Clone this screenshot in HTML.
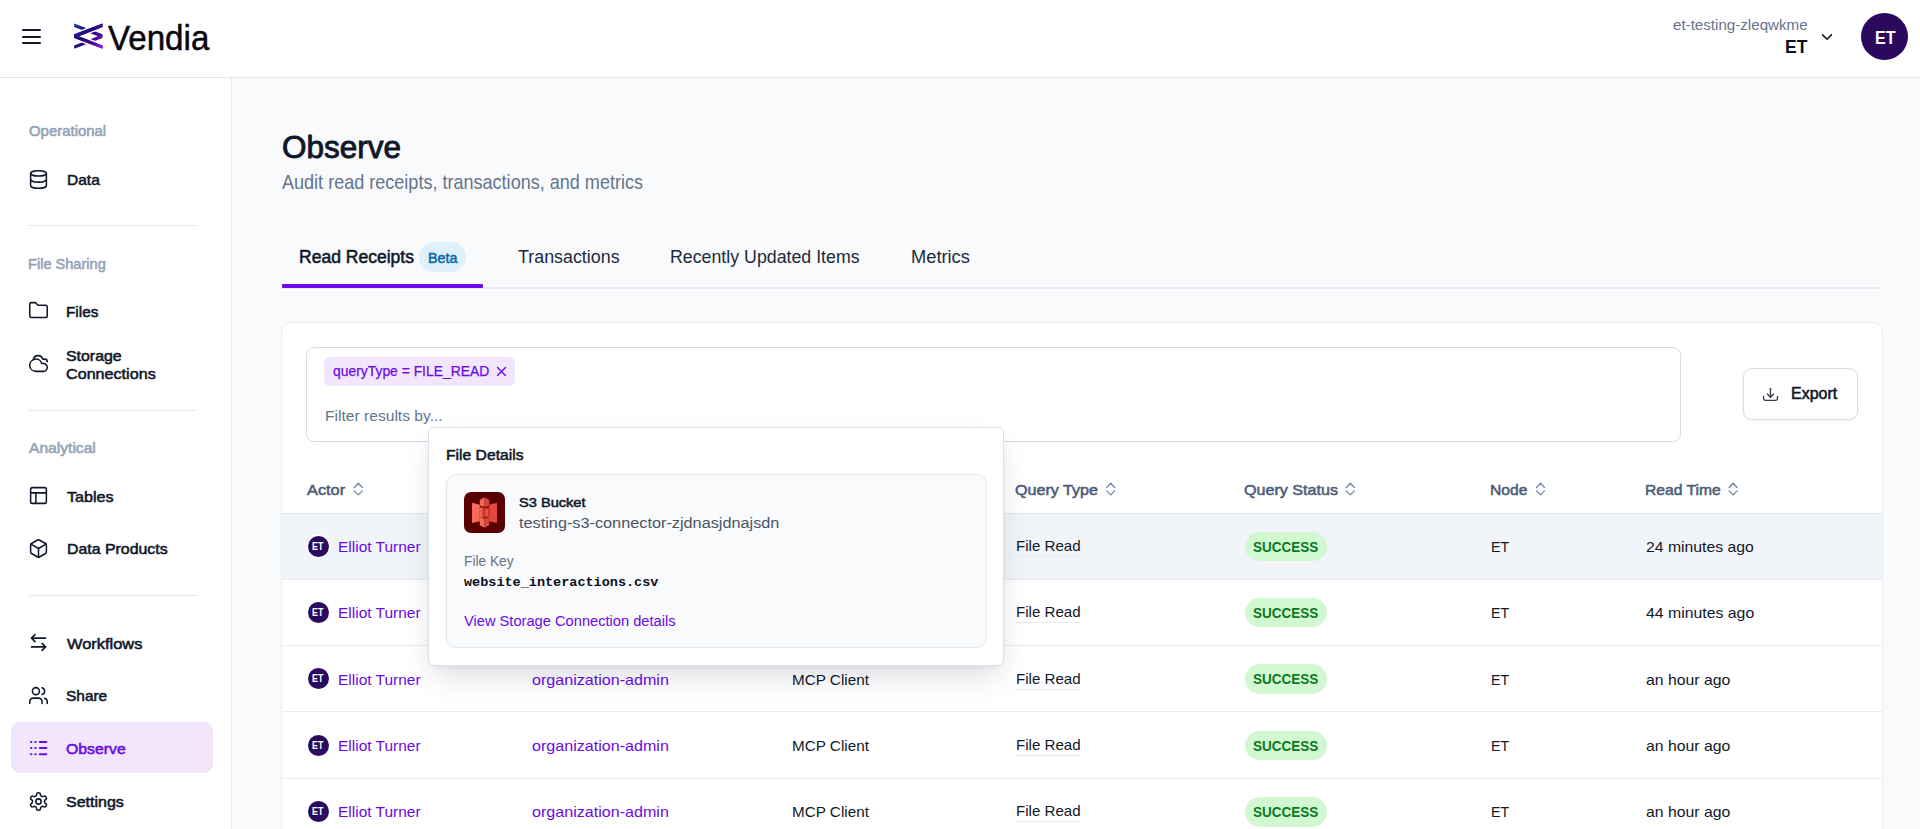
<!DOCTYPE html>
<html><head><meta charset="utf-8"><style>
html,body{margin:0;padding:0}
body{width:1920px;height:829px;overflow:hidden;position:relative;background:#fff;font-family:"Liberation Sans",sans-serif}
.t{position:absolute;white-space:nowrap;line-height:1;transform-origin:0 0}
.abs{position:absolute;box-sizing:border-box}
</style></head><body>
<div class="abs" style="left:0;top:0;width:1920px;height:78px;background:#fff;border-bottom:1px solid #e2e8f0"></div>
<div class="abs" style="left:0;top:78px;width:232px;height:751px;background:#fff;border-right:1px solid #e5e9f0"></div>
<div class="abs" style="left:232px;top:78px;width:1688px;height:751px;background:#f8fafc"></div>
<!-- hamburger -->
<div class="abs" style="left:22px;top:29px;width:19px;height:2px;background:#111827;border-radius:1px"></div>
<div class="abs" style="left:22px;top:35.5px;width:19px;height:2px;background:#111827;border-radius:1px"></div>
<div class="abs" style="left:22px;top:42px;width:19px;height:2px;background:#111827;border-radius:1px"></div>
<!-- logo mark -->
<svg class="abs" style="left:74px;top:23px;overflow:visible" width="29" height="26" viewBox="0 0 29 26">
<defs><linearGradient id="lg" gradientUnits="userSpaceOnUse" x1="0" y1="0" x2="29" y2="26"><stop offset="0" stop-color="#1f3cae"/><stop offset="0.42" stop-color="#23067c"/><stop offset="0.7" stop-color="#4a0b96"/><stop offset="1" stop-color="#9a20ee"/></linearGradient></defs>
<polygon fill="url(#lg)" points="0.17,0.53 0.17,3.97 23.86,13.2 0.17,22.4 0.17,25.85 28.56,15.0 28.56,11.2"/>
<polygon fill="url(#lg)" stroke="#fff" stroke-width="3" paint-order="stroke" stroke-linejoin="miter" points="28.56,0.53 28.56,3.97 4.87,13.2 28.56,22.4 28.56,25.85 0.17,15.0 0.17,11.2"/>
<polygon fill="url(#lg)" points="28.56,0.53 28.56,3.97 4.87,13.2 28.56,22.4 28.56,25.85 0.17,15.0 0.17,11.2"/>
</svg>
<!-- header chevron -->
<svg class="abs" style="left:1821px;top:33px" width="12" height="8" viewBox="0 0 12 8"><path d="M1.6 1.9 6 6.2 10.4 1.9" fill="none" stroke="#111827" stroke-width="1.6" stroke-linecap="round" stroke-linejoin="round"/></svg>
<div class="abs" style="left:1861px;top:13.3px;width:47px;height:47px;border-radius:50%;background:#2b0a5e"></div>
<!-- sidebar dividers -->
<div class="abs" style="left:28px;top:225px;width:169px;height:1px;background:#e5e9f0"></div>
<div class="abs" style="left:28px;top:410px;width:169px;height:1px;background:#e5e9f0"></div>
<div class="abs" style="left:28px;top:595px;width:169px;height:1px;background:#e5e9f0"></div>
<div class="abs" style="left:11px;top:722px;width:202px;height:51px;background:#f2e6fd;border-radius:9px"></div>
<!-- tabs -->
<div class="abs" style="left:281px;top:287px;width:1601px;height:2px;background:#e8ecf2"></div>
<div class="abs" style="left:282px;top:284px;width:201px;height:4px;background:#6a0ae6;border-radius:1px"></div>
<div class="abs" style="left:419px;top:242px;width:47px;height:30px;background:#dff0fb;border-radius:15px"></div>
<!-- card -->
<div class="abs" style="left:281px;top:322px;width:1602px;height:600px;background:#fff;border:1px solid #e8edf3;border-radius:10px"></div>
<div class="abs" style="left:306px;top:347px;width:1375px;height:95px;background:#fff;border:1px solid #d6dde8;border-radius:8px"></div>
<div class="abs" style="left:324px;top:357px;width:191px;height:29px;background:#f2e6fd;border-radius:6px"></div>
<svg class="abs" style="left:496px;top:366px" width="11" height="11" viewBox="0 0 11 11"><path d="M1.5 1.5 9.5 9.5M9.5 1.5 1.5 9.5" stroke="#6a0ae6" stroke-width="1.4" stroke-linecap="round"/></svg>
<div class="abs" style="left:1743px;top:368px;width:115px;height:52px;background:#fff;border:1px solid #d6dde8;border-radius:9px;box-shadow:0 1px 2px rgba(15,23,42,0.05)"></div>
<svg class="abs" style="left:0;top:0;overflow:visible" width="1920" height="829" fill="none" stroke="#353d4d" stroke-width="1.35" stroke-linecap="round" stroke-linejoin="round"><path d="M1770.5 388.3V397"/><path d="M1767.4 394.1 1770.5 397.2 1773.6 394.1"/><path d="M1763.6 396.3V398.6Q1763.6 400.3 1765.3 400.3H1775.8Q1777.5 400.3 1777.5 398.6V396.3"/></svg>
<!-- table -->
<div class="abs" style="left:282px;top:513px;width:1600px;height:1px;background:#e3e8f0"></div>
<div class="abs" style="left:282px;top:514px;width:1600px;height:65px;background:#f1f5f9"></div>
<div class="abs" style="left:282px;top:579px;width:1600px;height:1px;background:#e8ecf2"></div>
<div class="abs" style="left:282px;top:645px;width:1600px;height:1px;background:#e8ecf2"></div>
<div class="abs" style="left:282px;top:711px;width:1600px;height:1px;background:#e8ecf2"></div>
<div class="abs" style="left:282px;top:778px;width:1600px;height:1px;background:#e8ecf2"></div>
<div class="abs" style="left:307.5px;top:535.75px;width:21px;height:21px;border-radius:50%;background:#2b0a5e;box-shadow:0 0 0 1.2px #fff"></div>
<span class="t" style="left:312.4px;top:541.68px;font-size:10.3px;font-weight:700;color:#fff;transform:scaleX(0.86)">ET</span>
<div class="abs" style="left:1244.5px;top:531.60px;width:82px;height:29.5px;border-radius:15px;background:#d2f8d1"></div>
<div class="abs" style="left:1015px;top:556.00px;width:66px;height:1px;background:#e5e9f0"></div>
<div class="abs" style="left:307.5px;top:602.10px;width:21px;height:21px;border-radius:50%;background:#2b0a5e;box-shadow:0 0 0 1.2px #fff"></div>
<span class="t" style="left:312.4px;top:608.03px;font-size:10.3px;font-weight:700;color:#fff;transform:scaleX(0.86)">ET</span>
<div class="abs" style="left:1244.5px;top:597.95px;width:82px;height:29.5px;border-radius:15px;background:#d2f8d1"></div>
<div class="abs" style="left:1015px;top:622.35px;width:66px;height:1px;background:#e5e9f0"></div>
<div class="abs" style="left:307.5px;top:668.45px;width:21px;height:21px;border-radius:50%;background:#2b0a5e;box-shadow:0 0 0 1.2px #fff"></div>
<span class="t" style="left:312.4px;top:674.38px;font-size:10.3px;font-weight:700;color:#fff;transform:scaleX(0.86)">ET</span>
<div class="abs" style="left:1244.5px;top:664.30px;width:82px;height:29.5px;border-radius:15px;background:#d2f8d1"></div>
<div class="abs" style="left:1015px;top:688.70px;width:66px;height:1px;background:#e5e9f0"></div>
<div class="abs" style="left:307.5px;top:734.80px;width:21px;height:21px;border-radius:50%;background:#2b0a5e;box-shadow:0 0 0 1.2px #fff"></div>
<span class="t" style="left:312.4px;top:740.73px;font-size:10.3px;font-weight:700;color:#fff;transform:scaleX(0.86)">ET</span>
<div class="abs" style="left:1244.5px;top:730.65px;width:82px;height:29.5px;border-radius:15px;background:#d2f8d1"></div>
<div class="abs" style="left:1015px;top:755.05px;width:66px;height:1px;background:#e5e9f0"></div>
<div class="abs" style="left:307.5px;top:801.15px;width:21px;height:21px;border-radius:50%;background:#2b0a5e;box-shadow:0 0 0 1.2px #fff"></div>
<span class="t" style="left:312.4px;top:807.08px;font-size:10.3px;font-weight:700;color:#fff;transform:scaleX(0.86)">ET</span>
<div class="abs" style="left:1244.5px;top:797.00px;width:82px;height:29.5px;border-radius:15px;background:#d2f8d1"></div>
<div class="abs" style="left:1015px;top:821.40px;width:66px;height:1px;background:#e5e9f0"></div>
<span class="t" style="left:108.40px;top:20.03px;font-size:35.17px;font-weight:400;color:#08080c;font-family:'Liberation Sans', sans-serif;transform:scaleX(0.9421);-webkit-text-stroke:0.5px #08080c">Vendia</span>
<span class="t" style="left:1673.40px;top:17.88px;font-size:14.2px;font-weight:400;color:#64748b;font-family:'Liberation Sans', sans-serif;transform:scaleX(1.0668);">et-testing-zleqwkme</span>
<span class="t" style="left:1785.30px;top:38.00px;font-size:18.9px;font-weight:700;color:#0b1020;font-family:'Liberation Sans', sans-serif;transform:scaleX(0.9279);">ET</span>
<span class="t" style="left:1874.50px;top:29.54px;font-size:17.44px;font-weight:700;color:#ffffff;font-family:'Liberation Sans', sans-serif;transform:scaleX(0.9194);">ET</span>
<span class="t" style="left:28.50px;top:123.87px;font-size:14.03px;font-weight:400;color:#94a3b8;font-family:'Liberation Sans', sans-serif;transform:scaleX(1.0653);-webkit-text-stroke-width:0.55px">Operational</span>
<span class="t" style="left:28.40px;top:256.62px;font-size:14.03px;font-weight:400;color:#94a3b8;font-family:'Liberation Sans', sans-serif;transform:scaleX(1.0402);-webkit-text-stroke-width:0.55px">File Sharing</span>
<span class="t" style="left:28.50px;top:441.12px;font-size:14.03px;font-weight:400;color:#94a3b8;font-family:'Liberation Sans', sans-serif;transform:scaleX(1.1136);-webkit-text-stroke-width:0.55px">Analytical</span>
<span class="t" style="left:66.80px;top:171.70px;font-size:15.12px;font-weight:400;color:#0f172a;font-family:'Liberation Sans', sans-serif;transform:scaleX(1.0275);-webkit-text-stroke-width:0.55px">Data</span>
<span class="t" style="left:66.40px;top:304.00px;font-size:15.12px;font-weight:400;color:#0f172a;font-family:'Liberation Sans', sans-serif;transform:scaleX(1.0155);-webkit-text-stroke-width:0.55px">Files</span>
<span class="t" style="left:66.40px;top:348.30px;font-size:15.12px;font-weight:400;color:#0f172a;font-family:'Liberation Sans', sans-serif;transform:scaleX(1.0525);-webkit-text-stroke-width:0.55px">Storage</span>
<span class="t" style="left:66.40px;top:366.40px;font-size:15.12px;font-weight:400;color:#0f172a;font-family:'Liberation Sans', sans-serif;transform:scaleX(1.0679);-webkit-text-stroke-width:0.55px">Connections</span>
<span class="t" style="left:66.80px;top:488.70px;font-size:15.12px;font-weight:400;color:#0f172a;font-family:'Liberation Sans', sans-serif;transform:scaleX(1.0667);-webkit-text-stroke-width:0.55px">Tables</span>
<span class="t" style="left:66.80px;top:541.30px;font-size:15.12px;font-weight:400;color:#0f172a;font-family:'Liberation Sans', sans-serif;transform:scaleX(1.0507);-webkit-text-stroke-width:0.55px">Data Products</span>
<span class="t" style="left:66.60px;top:635.50px;font-size:15.12px;font-weight:400;color:#0f172a;font-family:'Liberation Sans', sans-serif;transform:scaleX(1.0864);-webkit-text-stroke-width:0.55px">Workflows</span>
<span class="t" style="left:66.40px;top:688.40px;font-size:15.12px;font-weight:400;color:#0f172a;font-family:'Liberation Sans', sans-serif;transform:scaleX(1.0216);-webkit-text-stroke-width:0.55px">Share</span>
<span class="t" style="left:66.40px;top:741.20px;font-size:15.12px;font-weight:400;color:#6a0ae6;font-family:'Liberation Sans', sans-serif;transform:scaleX(1.0454);-webkit-text-stroke-width:0.55px">Observe</span>
<span class="t" style="left:66.40px;top:794.20px;font-size:15.12px;font-weight:400;color:#0f172a;font-family:'Liberation Sans', sans-serif;transform:scaleX(1.0584);-webkit-text-stroke-width:0.55px">Settings</span>
<span class="t" style="left:282.00px;top:131.67px;font-size:31.69px;font-weight:400;color:#0f172a;font-family:'Liberation Sans', sans-serif;transform:scaleX(0.9936);-webkit-text-stroke:0.9px #0f172a">Observe</span>
<span class="t" style="left:282.00px;top:173.19px;font-size:19.62px;font-weight:400;color:#64748b;font-family:'Liberation Sans', sans-serif;transform:scaleX(0.9200);">Audit read receipts, transactions, and metrics</span>
<span class="t" style="left:298.75px;top:248.06px;font-size:18.53px;font-weight:400;color:#0f172a;font-family:'Liberation Sans', sans-serif;transform:scaleX(0.9469);-webkit-text-stroke-width:0.55px">Read Receipts</span>
<span class="t" style="left:427.75px;top:250.08px;font-size:15.26px;font-weight:400;color:#0b6ba3;font-family:'Liberation Sans', sans-serif;transform:scaleX(0.9402);-webkit-text-stroke-width:0.55px">Beta</span>
<span class="t" style="left:517.80px;top:248.06px;font-size:18.53px;font-weight:400;color:#1e293b;font-family:'Liberation Sans', sans-serif;transform:scaleX(0.9647);">Transactions</span>
<span class="t" style="left:670.40px;top:248.06px;font-size:18.53px;font-weight:400;color:#1e293b;font-family:'Liberation Sans', sans-serif;transform:scaleX(0.9595);">Recently Updated Items</span>
<span class="t" style="left:911.30px;top:248.06px;font-size:18.53px;font-weight:400;color:#1e293b;font-family:'Liberation Sans', sans-serif;transform:scaleX(0.9871);">Metrics</span>
<span class="t" style="left:332.50px;top:363.70px;font-size:14.53px;font-weight:400;color:#6a0ae6;font-family:'Liberation Sans', sans-serif;transform:scaleX(0.9563);-webkit-text-stroke-width:0.25px">queryType = FILE_READ</span>
<span class="t" style="left:324.70px;top:407.88px;font-size:15.26px;font-weight:400;color:#64748b;font-family:'Liberation Sans', sans-serif;transform:scaleX(1.0238);">Filter results by...</span>
<span class="t" style="left:1790.80px;top:386.41px;font-size:15.7px;font-weight:400;color:#0f172a;font-family:'Liberation Sans', sans-serif;transform:scaleX(1.0189);-webkit-text-stroke-width:0.55px">Export</span>
<span class="t" style="left:307.40px;top:482.06px;font-size:15.41px;font-weight:400;color:#4b5d78;font-family:'Liberation Sans', sans-serif;transform:scaleX(1.0593);-webkit-text-stroke-width:0.55px">Actor</span>
<span class="t" style="left:1015.00px;top:482.06px;font-size:15.41px;font-weight:400;color:#4b5d78;font-family:'Liberation Sans', sans-serif;transform:scaleX(1.0446);-webkit-text-stroke-width:0.55px">Query Type</span>
<span class="t" style="left:1243.50px;top:482.06px;font-size:15.41px;font-weight:400;color:#4b5d78;font-family:'Liberation Sans', sans-serif;transform:scaleX(1.0454);-webkit-text-stroke-width:0.55px">Query Status</span>
<span class="t" style="left:1490.30px;top:482.06px;font-size:15.41px;font-weight:400;color:#4b5d78;font-family:'Liberation Sans', sans-serif;transform:scaleX(1.0151);-webkit-text-stroke-width:0.55px">Node</span>
<span class="t" style="left:1644.60px;top:482.06px;font-size:15.41px;font-weight:400;color:#4b5d78;font-family:'Liberation Sans', sans-serif;transform:scaleX(1.0161);-webkit-text-stroke-width:0.55px">Read Time</span>
<span class="t" style="left:338.00px;top:538.96px;font-size:15.41px;font-weight:400;color:#6a0ae6;font-family:'Liberation Sans', sans-serif;transform:scaleX(1.0048);">Elliot Turner</span>
<span class="t" style="left:532.20px;top:538.96px;font-size:15.41px;font-weight:400;color:#6a0ae6;font-family:'Liberation Sans', sans-serif;transform:scaleX(1.0448);">organization-admin</span>
<span class="t" style="left:791.90px;top:538.96px;font-size:15.41px;font-weight:400;color:#111827;font-family:'Liberation Sans', sans-serif;transform:scaleX(0.9905);">MCP Client</span>
<span class="t" style="left:1016.00px;top:537.96px;font-size:15.41px;font-weight:400;color:#111827;font-family:'Liberation Sans', sans-serif;transform:scaleX(0.9797);">File Read</span>
<span class="t" style="left:1253.00px;top:539.63px;font-size:14.97px;font-weight:700;color:#0a7b22;font-family:'Liberation Sans', sans-serif;transform:scaleX(0.9022);">SUCCESS</span>
<span class="t" style="left:1491.30px;top:538.96px;font-size:15.41px;font-weight:400;color:#111827;font-family:'Liberation Sans', sans-serif;transform:scaleX(0.9244);">ET</span>
<span class="t" style="left:1646.00px;top:538.96px;font-size:15.41px;font-weight:400;color:#111827;font-family:'Liberation Sans', sans-serif;transform:scaleX(1.0232);">24 minutes ago</span>
<span class="t" style="left:338.00px;top:605.31px;font-size:15.41px;font-weight:400;color:#6a0ae6;font-family:'Liberation Sans', sans-serif;transform:scaleX(1.0048);">Elliot Turner</span>
<span class="t" style="left:532.20px;top:605.31px;font-size:15.41px;font-weight:400;color:#6a0ae6;font-family:'Liberation Sans', sans-serif;transform:scaleX(1.0448);">organization-admin</span>
<span class="t" style="left:791.90px;top:605.31px;font-size:15.41px;font-weight:400;color:#111827;font-family:'Liberation Sans', sans-serif;transform:scaleX(0.9905);">MCP Client</span>
<span class="t" style="left:1016.00px;top:604.31px;font-size:15.41px;font-weight:400;color:#111827;font-family:'Liberation Sans', sans-serif;transform:scaleX(0.9797);">File Read</span>
<span class="t" style="left:1253.00px;top:605.98px;font-size:14.97px;font-weight:700;color:#0a7b22;font-family:'Liberation Sans', sans-serif;transform:scaleX(0.9022);">SUCCESS</span>
<span class="t" style="left:1491.30px;top:605.31px;font-size:15.41px;font-weight:400;color:#111827;font-family:'Liberation Sans', sans-serif;transform:scaleX(0.9244);">ET</span>
<span class="t" style="left:1646.00px;top:605.31px;font-size:15.41px;font-weight:400;color:#111827;font-family:'Liberation Sans', sans-serif;transform:scaleX(1.0270);">44 minutes ago</span>
<span class="t" style="left:338.00px;top:671.66px;font-size:15.41px;font-weight:400;color:#6a0ae6;font-family:'Liberation Sans', sans-serif;transform:scaleX(1.0048);">Elliot Turner</span>
<span class="t" style="left:532.20px;top:671.66px;font-size:15.41px;font-weight:400;color:#6a0ae6;font-family:'Liberation Sans', sans-serif;transform:scaleX(1.0448);">organization-admin</span>
<span class="t" style="left:791.90px;top:671.66px;font-size:15.41px;font-weight:400;color:#111827;font-family:'Liberation Sans', sans-serif;transform:scaleX(0.9905);">MCP Client</span>
<span class="t" style="left:1016.00px;top:670.66px;font-size:15.41px;font-weight:400;color:#111827;font-family:'Liberation Sans', sans-serif;transform:scaleX(0.9797);">File Read</span>
<span class="t" style="left:1253.00px;top:672.33px;font-size:14.97px;font-weight:700;color:#0a7b22;font-family:'Liberation Sans', sans-serif;transform:scaleX(0.9022);">SUCCESS</span>
<span class="t" style="left:1491.30px;top:671.66px;font-size:15.41px;font-weight:400;color:#111827;font-family:'Liberation Sans', sans-serif;transform:scaleX(0.9244);">ET</span>
<span class="t" style="left:1646.00px;top:671.66px;font-size:15.41px;font-weight:400;color:#111827;font-family:'Liberation Sans', sans-serif;transform:scaleX(1.0261);">an hour ago</span>
<span class="t" style="left:338.00px;top:738.01px;font-size:15.41px;font-weight:400;color:#6a0ae6;font-family:'Liberation Sans', sans-serif;transform:scaleX(1.0048);">Elliot Turner</span>
<span class="t" style="left:532.20px;top:738.01px;font-size:15.41px;font-weight:400;color:#6a0ae6;font-family:'Liberation Sans', sans-serif;transform:scaleX(1.0448);">organization-admin</span>
<span class="t" style="left:791.90px;top:738.01px;font-size:15.41px;font-weight:400;color:#111827;font-family:'Liberation Sans', sans-serif;transform:scaleX(0.9905);">MCP Client</span>
<span class="t" style="left:1016.00px;top:737.01px;font-size:15.41px;font-weight:400;color:#111827;font-family:'Liberation Sans', sans-serif;transform:scaleX(0.9797);">File Read</span>
<span class="t" style="left:1253.00px;top:738.68px;font-size:14.97px;font-weight:700;color:#0a7b22;font-family:'Liberation Sans', sans-serif;transform:scaleX(0.9022);">SUCCESS</span>
<span class="t" style="left:1491.30px;top:738.01px;font-size:15.41px;font-weight:400;color:#111827;font-family:'Liberation Sans', sans-serif;transform:scaleX(0.9244);">ET</span>
<span class="t" style="left:1646.00px;top:738.01px;font-size:15.41px;font-weight:400;color:#111827;font-family:'Liberation Sans', sans-serif;transform:scaleX(1.0261);">an hour ago</span>
<span class="t" style="left:338.00px;top:804.36px;font-size:15.41px;font-weight:400;color:#6a0ae6;font-family:'Liberation Sans', sans-serif;transform:scaleX(1.0048);">Elliot Turner</span>
<span class="t" style="left:532.20px;top:804.36px;font-size:15.41px;font-weight:400;color:#6a0ae6;font-family:'Liberation Sans', sans-serif;transform:scaleX(1.0448);">organization-admin</span>
<span class="t" style="left:791.90px;top:804.36px;font-size:15.41px;font-weight:400;color:#111827;font-family:'Liberation Sans', sans-serif;transform:scaleX(0.9905);">MCP Client</span>
<span class="t" style="left:1016.00px;top:803.36px;font-size:15.41px;font-weight:400;color:#111827;font-family:'Liberation Sans', sans-serif;transform:scaleX(0.9797);">File Read</span>
<span class="t" style="left:1253.00px;top:805.03px;font-size:14.97px;font-weight:700;color:#0a7b22;font-family:'Liberation Sans', sans-serif;transform:scaleX(0.9022);">SUCCESS</span>
<span class="t" style="left:1491.30px;top:804.36px;font-size:15.41px;font-weight:400;color:#111827;font-family:'Liberation Sans', sans-serif;transform:scaleX(0.9244);">ET</span>
<span class="t" style="left:1646.00px;top:804.36px;font-size:15.41px;font-weight:400;color:#111827;font-family:'Liberation Sans', sans-serif;transform:scaleX(1.0261);">an hour ago</span>
<svg style="position:absolute;left:27.95px;top:168.6px;color:#0f172a" width="21" height="21" viewBox="0 0 24 24" fill="none" stroke="currentColor" stroke-width="1.75" stroke-linecap="round" stroke-linejoin="round"><ellipse cx="12" cy="5" rx="9" ry="3"/><path d="M3 5V19A9 3 0 0 0 21 19V5"/><path d="M3 12A9 3 0 0 0 21 12"/></svg>
<svg style="position:absolute;left:28.0px;top:300.0px;color:#0f172a" width="21" height="21" viewBox="0 0 24 24" fill="none" stroke="currentColor" stroke-width="1.75" stroke-linecap="round" stroke-linejoin="round"><path d="M20 20a2 2 0 0 0 2-2V8a2 2 0 0 0-2-2h-7.9a2 2 0 0 1-1.69-.9L9.6 3.9A2 2 0 0 0 7.93 3H4a2 2 0 0 0-2 2v13a2 2 0 0 0 2 2Z"/></svg>
<svg style="position:absolute;left:28.2px;top:353.4px;color:#0f172a" width="21" height="21" viewBox="0 0 24 24" fill="none" stroke="currentColor" stroke-width="1.75" stroke-linecap="round" stroke-linejoin="round"><path d="M17.5 21H9a7 7 0 1 1 6.71-9h1.79a4.5 4.5 0 1 1 0 9Z"/><path d="M22 10a3 3 0 0 0-3-3h-2.207a5.502 5.502 0 0 0-10.702.5"/></svg>
<svg style="position:absolute;left:28.1px;top:485.2px;color:#0f172a" width="21" height="21" viewBox="0 0 24 24" fill="none" stroke="currentColor" stroke-width="1.75" stroke-linecap="round" stroke-linejoin="round"><rect x="3" y="3" width="18" height="18" rx="2"/><path d="M3 9h18"/><path d="M9 9v12"/></svg>
<svg style="position:absolute;left:28.1px;top:538.3px;color:#0f172a" width="21" height="21" viewBox="0 0 24 24" fill="none" stroke="currentColor" stroke-width="1.75" stroke-linecap="round" stroke-linejoin="round"><path d="M21 8a2 2 0 0 0-1-1.73l-7-4a2 2 0 0 0-2 0l-7 4A2 2 0 0 0 3 8v8a2 2 0 0 0 1 1.73l7 4a2 2 0 0 0 2 0l7-4A2 2 0 0 0 21 16Z"/><path d="m3.3 7 8.7 5 8.7-5"/><path d="M12 22V12"/></svg>
<svg style="position:absolute;left:28.1px;top:631.7px;color:#0f172a" width="21" height="21" viewBox="0 0 24 24" fill="none" stroke="currentColor" stroke-width="1.75" stroke-linecap="round" stroke-linejoin="round"><path d="M8 3 4 7l4 4"/><path d="M4 7h16"/><path d="m16 21 4-4-4-4"/><path d="M20 17H4"/></svg>
<svg style="position:absolute;left:28.2px;top:684.7px;color:#0f172a" width="21" height="21" viewBox="0 0 24 24" fill="none" stroke="currentColor" stroke-width="1.75" stroke-linecap="round" stroke-linejoin="round"><path d="M16 21v-2a4 4 0 0 0-4-4H6a4 4 0 0 0-4 4v2"/><circle cx="9" cy="7" r="4"/><path d="M22 21v-2a4 4 0 0 0-3-3.87"/><path d="M16 3.13a4 4 0 0 1 0 7.75"/></svg>
<svg style="position:absolute;left:0;top:0" width="60" height="829"><rect x="30" y="740.9" width="2.4" height="2" rx="1" fill="#6a0ae6"/><rect x="34.2" y="740.9" width="2.4" height="2" rx="1" fill="#6a0ae6"/><rect x="38.9" y="740.9" width="8.4" height="2" rx="1" fill="#6a0ae6"/><rect x="30" y="747" width="2.4" height="2" rx="1" fill="#6a0ae6"/><rect x="34.2" y="747" width="2.4" height="2" rx="1" fill="#6a0ae6"/><rect x="38.9" y="747" width="8.4" height="2" rx="1" fill="#6a0ae6"/><rect x="30" y="753.2" width="2.4" height="2" rx="1" fill="#6a0ae6"/><rect x="34.2" y="753.2" width="2.4" height="2" rx="1" fill="#6a0ae6"/><rect x="38.9" y="753.2" width="8.4" height="2" rx="1" fill="#6a0ae6"/></svg>
<svg style="position:absolute;left:27.9px;top:790.8px;color:#0f172a" width="21" height="21" viewBox="0 0 24 24" fill="none" stroke="currentColor" stroke-width="1.75" stroke-linecap="round" stroke-linejoin="round"><path d="M12.22 2h-.44a2 2 0 0 0-2 2v.18a2 2 0 0 1-1 1.73l-.43.25a2 2 0 0 1-2 0l-.15-.08a2 2 0 0 0-2.73.73l-.22.38a2 2 0 0 0 .73 2.73l.15.1a2 2 0 0 1 1 1.72v.51a2 2 0 0 1-1 1.74l-.15.09a2 2 0 0 0-.73 2.73l.22.38a2 2 0 0 0 2.73.73l.15-.08a2 2 0 0 1 2 0l.43.25a2 2 0 0 1 1 1.73V20a2 2 0 0 0 2 2h.44a2 2 0 0 0 2-2v-.18a2 2 0 0 1 1-1.73l.43-.25a2 2 0 0 1 2 0l.15.08a2 2 0 0 0 2.73-.73l.22-.39a2 2 0 0 0-.73-2.73l-.15-.08a2 2 0 0 1-1-1.74v-.5a2 2 0 0 1 1-1.74l.15-.09a2 2 0 0 0 .73-2.73l-.22-.38a2 2 0 0 0-2.73-.73l-.15.08a2 2 0 0 1-2 0l-.43-.25a2 2 0 0 1-1-1.73V4a2 2 0 0 0-2-2z"/><circle cx="12" cy="12" r="3"/></svg>
<svg style="position:absolute;left:0;top:0;overflow:visible" width="1920" height="829" fill="none" stroke="#7186a3" stroke-width="1.3" stroke-linecap="round" stroke-linejoin="round"><path d="M354.3 487.5 L358.40000000000003 483.3 L362.3 487.5 M354.3 490.9 L358.40000000000003 494.9 L362.3 490.9"/><path d="M1106.7 487.5 L1110.8 483.3 L1114.7 487.5 M1106.7 490.9 L1110.8 494.9 L1114.7 490.9"/><path d="M1346.3 487.5 L1350.3999999999999 483.3 L1354.3 487.5 M1346.3 490.9 L1350.3999999999999 494.9 L1354.3 490.9"/><path d="M1536.5 487.5 L1540.6 483.3 L1544.5 487.5 M1536.5 490.9 L1540.6 494.9 L1544.5 490.9"/><path d="M1729.1 487.5 L1733.1999999999998 483.3 L1737.1 487.5 M1729.1 490.9 L1733.1999999999998 494.9 L1737.1 490.9"/></svg>
<div class="abs" style="left:428px;top:427px;width:576px;height:239px;background:#fff;border:1px solid #dbe1ea;border-radius:6px;box-shadow:0 14px 30px -6px rgba(15,23,42,0.16),0 4px 8px -4px rgba(15,23,42,0.08)"></div>
<div class="abs" style="left:445.5px;top:473.5px;width:541px;height:174px;background:#f8fafc;border:1px solid #e2e8f0;border-radius:10px"></div>
<div class="abs" style="left:464px;top:492px;width:41px;height:41px;background:#5a0000;border-radius:7px"></div>
<svg class="abs" style="left:464px;top:492px" width="41" height="41" viewBox="0 0 41 41">
<polygon points="8,10.8 15.9,12.8 15.9,29.2 8,31" fill="#f36b5a"/>
<polygon points="33,10.8 25.1,12.8 25.1,29.2 33,31" fill="#e24a3c"/>
<polygon points="20.5,5.2 15.8,7.9 15.8,13.4 20.5,14.4" fill="#f36b5a"/>
<polygon points="20.5,5.2 25.2,7.9 25.2,13.4 20.5,14.4" fill="#dc4538"/>
<polygon points="15.8,13.4 20.5,14.4 25.2,13.4 25.2,14.6 20.5,15.6 15.8,14.6" fill="#a82a20"/>
<polygon points="15.8,15.6 25.2,15.6 25.2,25.6 15.8,25.6" fill="#c93429"/>
<polygon points="15.8,15.6 18.6,15.6 18.6,25.6 15.8,25.6" fill="#ee5f4f"/>
<polygon points="21.2,17.5 24,17.5 24,23.8 21.2,23.8" fill="#e55345"/>
<polygon points="15.8,25.6 20.5,26.8 20.5,35.8 15.8,33.2" fill="#f36b5a"/>
<polygon points="25.2,25.6 20.5,26.8 20.5,35.8 25.2,33.2" fill="#dc4538"/>
</svg>
<span class="t" style="left:446.00px;top:446.66px;font-size:15.41px;font-weight:400;color:#0f172a;font-family:'Liberation Sans', sans-serif;transform:scaleX(1.0170);-webkit-text-stroke-width:0.55px">File Details</span>
<span class="t" style="left:518.80px;top:495.66px;font-size:13.52px;font-weight:400;color:#0f172a;font-family:'Liberation Sans', sans-serif;transform:scaleX(1.0794);-webkit-text-stroke-width:0.55px">S3 Bucket</span>
<span class="t" style="left:518.80px;top:516.69px;font-size:13.95px;font-weight:400;color:#4b5563;font-family:'Liberation Sans', sans-serif;transform:scaleX(1.1671);">testing-s3-connector-zjdnasjdnajsdn</span>
<span class="t" style="left:463.90px;top:554.17px;font-size:14.68px;font-weight:400;color:#6b7280;font-family:'Liberation Sans', sans-serif;transform:scaleX(0.9358);">File Key</span>
<span class="t" style="left:464.00px;top:576.36px;font-size:13.5px;font-weight:700;color:#0b1020;font-family:'Liberation Mono', monospace;transform:scaleX(0.9998);">website_interactions.csv</span>
<span class="t" style="left:464.00px;top:612.68px;font-size:15.26px;font-weight:400;color:#6a0ae6;font-family:'Liberation Sans', sans-serif;transform:scaleX(0.9612);">View Storage Connection details</span>
</body></html>
